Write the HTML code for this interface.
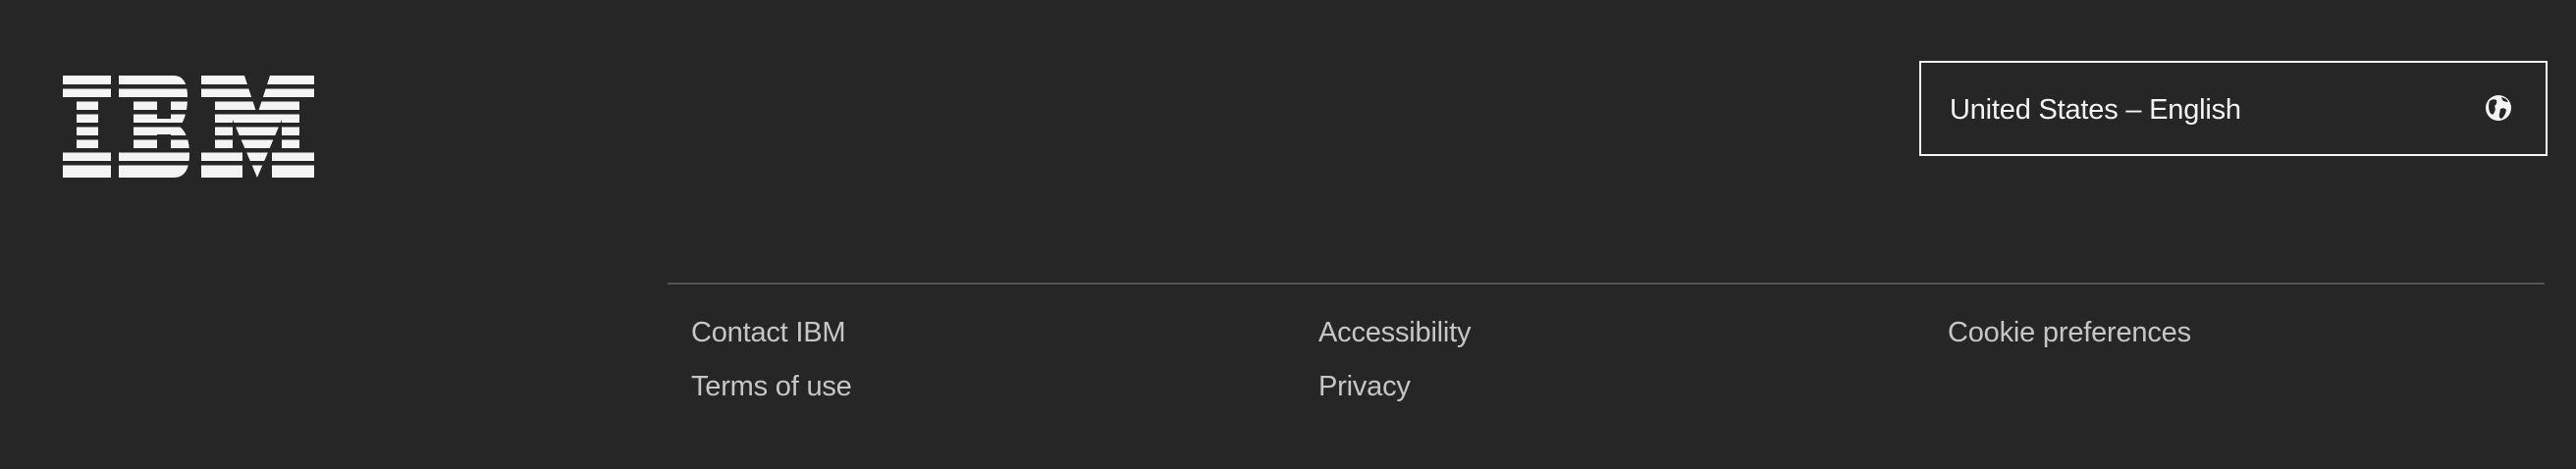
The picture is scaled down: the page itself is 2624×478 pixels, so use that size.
<!DOCTYPE html>
<html><head><meta charset="utf-8"><style>
html,body{margin:0;padding:0;background:#262626;width:2624px;height:478px;overflow:hidden;font-family:"Liberation Sans",sans-serif;}
.abs{position:absolute;white-space:nowrap}
.lnk{color:#c6c6c6;font-size:29px;letter-spacing:-0.2px}
</style></head><body>
<svg class="abs" style="left:64px;top:77px" width="256" height="104" viewBox="0 0 256 104">
<defs><mask id="m"><rect width="256" height="104" fill="#fff"/>
<g fill="#000"><rect y="9" width="256" height="4.5"/><rect y="22" width="256" height="4.5"/><rect y="35" width="256" height="4.5"/><rect y="48" width="256" height="4.5"/><rect y="61" width="256" height="4.5"/><rect y="74" width="256" height="4.5"/><rect y="87" width="256" height="4.5"/></g></mask></defs>
<g fill="#f4f4f4" mask="url(#m)" fill-rule="evenodd">
<path d="M0,0H49V26H36V78H49V104H0V78H14V26H0Z"/>
<path d="M57,0H113Q127,0 127,22Q127,42 119,52Q129,60 129,80Q129,104 113,104H57V78H72V26H57Z M96,26H110V44H96Z M96,60H110V78H96Z"/>
<path d="M141,0H185L198,40L211,0H256V26H241V78H256V104H213V78H223V45L198,104L173,45V78H183V104H141V78H155V26H141Z"/>
</g></svg>
<div class="abs" style="left:1955px;top:62px;width:636px;height:93px;border:2px solid #f4f4f4"></div>
<div class="abs" style="left:1986px;top:96px;color:#f4f4f4;font-size:29px;letter-spacing:-0.2px">United States – English</div>
<svg class="abs" style="left:2531px;top:96px" width="28" height="28" viewBox="0 0 28 28">
<circle cx="14" cy="14" r="13" fill="#f4f4f4"/>
<path d="M5,7Q9,4 12,6Q13,10 10,12Q12,16 9,20Q7,22 5,18Q3,12 5,7Z" fill="#262626"/>
<path d="M16,15Q20,13 22,16Q21,22 17,25Q14,24 15,20Z M17,3Q22,4 24,8Q20,8 18,6Z" fill="#262626"/>
</svg>
<div class="abs" style="left:680px;top:288px;width:1912px;height:2px;background:#525252"></div>
<div class="abs lnk" style="left:704px;top:323px">Contact IBM</div>
<div class="abs lnk" style="left:704px;top:378px">Terms of use</div>
<div class="abs lnk" style="left:1343px;top:323px">Accessibility</div>
<div class="abs lnk" style="left:1343px;top:378px">Privacy</div>
<div class="abs lnk" style="left:1984px;top:323px">Cookie preferences</div>
</body></html>
